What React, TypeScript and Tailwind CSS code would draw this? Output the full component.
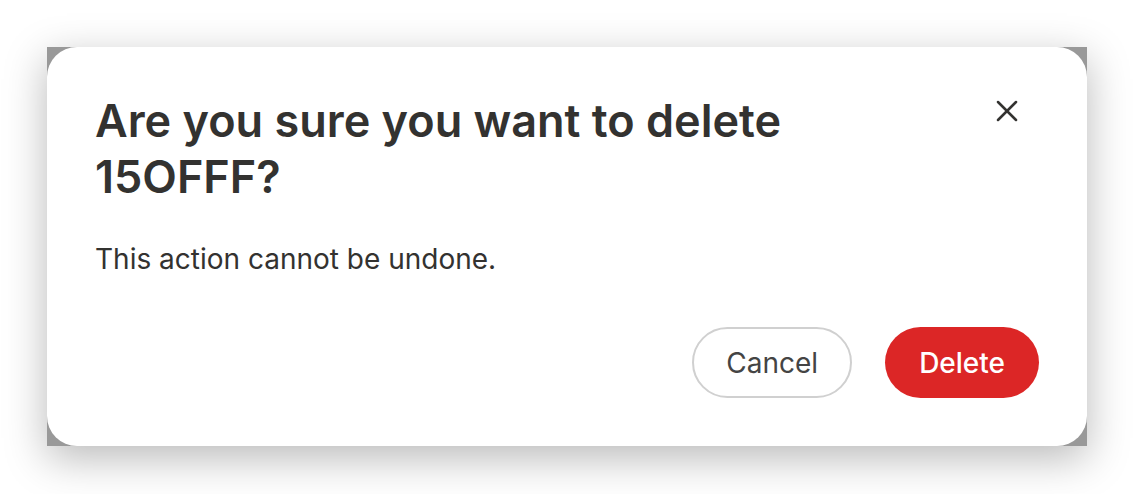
import React from 'react';
import { X } from 'lucide-react';

const ConfirmDelete = ({ name }: { name: string }) => {
  return (
    <div className="bg-[#999999] shadow-[0_12px_40px_rgba(0,0,0,0.28)]">
      <div className="bg-white rounded-[30px] h-[399px] px-12 pt-[46px] pb-12 flex flex-col">
        <div className="flex items-start justify-between">
          <h2 className="text-[45px] leading-[56px] font-semibold text-[#333230] max-w-[720px]">
            Are you sure you want to delete {name}?
          </h2>
          <button className="w-16 h-16 -mt-[14px] flex items-center justify-center text-[#333230] shrink-0">
            <X size={36} strokeWidth={1.7} />
          </button>
        </div>
        <p className="mt-[36px] text-[28px] leading-[36px] text-[#333230]">
          This action cannot be undone.
        </p>
        <div className="mt-auto flex justify-end gap-[33px]">
          <button className="h-[71px] px-[32px] rounded-full border-2 border-[#d0d0d0] text-[28px] text-[#444] bg-white">
            Cancel
          </button>
          <button className="h-[71px] px-[34px] rounded-full bg-[#dc2626] text-[28px] font-medium text-white">
            Delete
          </button>
        </div>
      </div>
    </div>
  );
};

const App = () => {
  return (
    <div className="w-[1134px] h-[494px] bg-white p-[47px]" style={{ fontFamily: 'Inter, "Noto Sans", sans-serif' }}>
      <ConfirmDelete name="15OFFF" />
    </div>
  );
};

export default App;
